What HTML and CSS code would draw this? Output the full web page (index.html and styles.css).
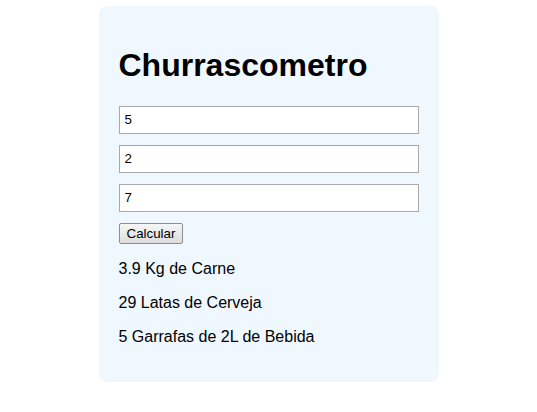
FILE: index.html
```html
<!DOCTYPE html>
<html lang="pt">
<head>
<meta charset="utf-8">
<title>Churrascometro</title>
<link rel="stylesheet" href="styles.css">
</head>
<body>
<div class="card">
  <h1 class="title">Churrascometro</h1>
  <input class="field" type="text" value="5">
  <input class="field" type="text" value="2">
  <input class="field" type="text" value="7">
  <button class="btn" type="button">Calcular</button>
  <div class="results">
    <p class="result">3.9 Kg de Carne</p>
    <p class="result">29 Latas de Cerveja</p>
    <p class="result">5 Garrafas de 2L de Bebida</p>
  </div>
</div>
</body>
</html>
```

FILE: styles.css
```css
html, body {
  margin: 0;
  padding: 0;
  background: #ffffff;
}
body {
  font-family: "Liberation Sans", Arial, sans-serif;
  color: #000;
  padding-top: 6px;
}
.card {
  width: 300px;
  margin: 0 auto;
  padding: 20px;
  background: #f0f8ff;
  border-radius: 8px;
}
.title {
  font-size: 32px;
  font-weight: bold;
  margin: 21.44px 0;
  line-height: normal;
}
.field {
  display: block;
  box-sizing: border-box;
  width: 300px;
  height: 28px;
  margin: 0 0 11px 0;
  padding: 0 5px;
  border: 1px solid #a9a9a9;
  background: #fff;
  font-family: "Liberation Sans", Arial, sans-serif;
  font-size: 13.33px;
  color: #000;
  outline: none;
}
.btn {
  display: block;
  box-sizing: border-box;
  height: 21px;
  padding: 1px 7px;
  font-family: "Liberation Sans", Arial, sans-serif;
  font-size: 13.33px;
  color: #000;
  background: linear-gradient(#f6f6f6, #dddddd);
  border: 1px solid #8f8f8f;
  border-radius: 2px;
}
.result {
  margin: 16px 0;
  font-size: 16px;
}
```
